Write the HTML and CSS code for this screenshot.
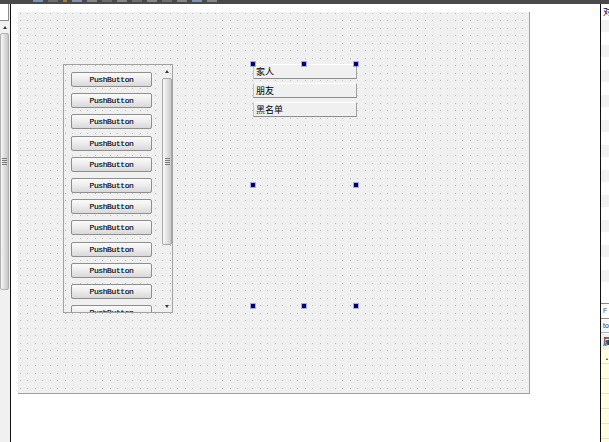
FILE: index.html
```html
<!DOCTYPE html>
<html lang="zh">
<head>
<meta charset="utf-8">
<title>Qt Designer</title>
<link rel="stylesheet" href="styles.css">
</head>
<body>
<div class="topbar">
  <div class="tb-icons">
    <span class="tbi c1"></span><span class="tbi c2"></span><span class="tbi c3"></span><span class="tbi c1"></span>
    <span class="tbi c4"></span><span class="tbi c2"></span><span class="tbi c4"></span><span class="tbi c2"></span>
    <span class="tbi c4"></span><span class="tbi c2"></span><span class="tbi c4"></span><span class="tbi c1"></span>
    <span class="tbi c4"></span>
  </div>
</div>
<div class="main">
  <aside class="left">
    <div class="left-field"></div>
    <div class="left-scroll">
      <div class="ls-up"><i class="tri-up"></i></div>
      <div class="ls-handle"><span class="grip"></span></div>
    </div>
  </aside>

  <section class="workspace">
    <div class="form">
      <div class="scrollarea">
        <div class="viewport">
          <div class="pb">PushButton</div>
          <div class="pb">PushButton</div>
          <div class="pb">PushButton</div>
          <div class="pb">PushButton</div>
          <div class="pb">PushButton</div>
          <div class="pb">PushButton</div>
          <div class="pb">PushButton</div>
          <div class="pb">PushButton</div>
          <div class="pb">PushButton</div>
          <div class="pb">PushButton</div>
          <div class="pb">PushButton</div>
          <div class="pb">PushButton</div>
        </div>
        <div class="vscroll">
          <div class="sb-up"><i class="tri-up"></i></div>
          <div class="sb-handle"><span class="grip"></span></div>
          <div class="sb-groove"></div>
          <div class="sb-down"><i class="tri-down"></i></div>
        </div>
      </div>

      <div class="vlayout">
        <div class="item">家人</div>
        <div class="item">朋友</div>
        <div class="item">黑名单</div>
        <span class="handle h-tl"></span>
        <span class="handle h-tc"></span>
        <span class="handle h-tr"></span>
        <span class="handle h-ml"></span>
        <span class="handle h-mr"></span>
        <span class="handle h-bl"></span>
        <span class="handle h-bc"></span>
        <span class="handle h-br"></span>
      </div>
    </div>
  </section>

  <aside class="right">
    <div class="rp-head">对</div>
    <div class="rp-list"></div>
    <div class="rp-spacer"></div>
    <div class="rp-filter">F</div>
    <div class="rp-field">to</div>
    <div class="rp-prophead">属</div>
    <div class="rp-props"><i class="rp-mark"></i></div>
  </aside>
</div>
</body>
</html>
```
FILE: styles.css
```css
* { box-sizing: border-box; }

html, body {
  margin: 0;
  padding: 0;
}

body {
  width: 609px;
  height: 442px;
  overflow: hidden;
  background: #ffffff;
  font-family: "Liberation Sans", "Noto Sans CJK SC", sans-serif;
}

/* ---------- top toolbar strip ---------- */
.topbar {
  height: 4px;
  background: #4a4a4a;
  overflow: hidden;
}

.tb-icons {
  display: flex;
  gap: 5px;
  margin-left: 33px;
}

.tbi {
  width: 10px;
  height: 2px;
}

.c1 { background: #7f92ae; }
.c2 { background: #6e6e6e; }
.c3 { background: #b07a3a; width: 4px; }
.c4 { background: #868686; }

/* ---------- layout ---------- */
.main {
  display: flex;
  height: 438px;
}

/* ---------- left dock ---------- */
.left {
  width: 11px;
  border-right: 1px solid #111111;
  background: #f0f0f0;
  display: flex;
  flex-direction: column;
}

.left-field {
  width: 9px;
  height: 17px;
  background: #ffffff;
  border-right: 1px solid #8c8c8c;
  border-bottom: 1px solid #8c8c8c;
}

.left-scroll {
  width: 9px;
  display: flex;
  flex-direction: column;
}

.ls-up {
  height: 12px;
  display: flex;
  align-items: center;
  justify-content: center;
}

.ls-handle {
  height: 257px;
  width: 9px;
  border: 1px solid #b0b0b0;
  border-radius: 2px;
  background: linear-gradient(90deg, #f6f6f6, #dadada 60%, #c6c6c6);
  display: flex;
  align-items: center;
  justify-content: center;
}

.tri-up {
  display: block;
  width: 0;
  height: 0;
  border-left: 2.5px solid transparent;
  border-right: 2.5px solid transparent;
  border-bottom: 3px solid #3a3a3a;
}

.tri-down {
  display: block;
  width: 0;
  height: 0;
  border-left: 2.5px solid transparent;
  border-right: 2.5px solid transparent;
  border-top: 3px solid #3a3a3a;
}

.grip {
  display: block;
  width: 5px;
  height: 7px;
  background: repeating-linear-gradient(#7a7a7a 0 1px, transparent 1px 2px);
}

/* ---------- central workspace ---------- */
.workspace {
  flex: 1;
  background: #ffffff;
  padding: 8px 0 0 7px;
}

.form {
  position: relative;
  width: 512px;
  height: 382px;
  background: #f0f0f0;
  border-right: 1px solid #a0a0a0;
  border-bottom: 1px solid #a0a0a0;
}

.form::before {
  content: "";
  position: absolute;
  inset: 0;
  pointer-events: none;
  background: linear-gradient(90deg, #b6b6b6 0 1px, transparent 1px 7px, #c2c2c2 7px 8px, transparent 8px) 2px 0 / 15px 100%;
  -webkit-mask: linear-gradient(#000 0 1px, transparent 1px 7px, #000 7px 8px, transparent 8px) 0 1px / 100% 15px;
  mask: linear-gradient(#000 0 1px, transparent 1px 7px, #000 7px 8px, transparent 8px) 0 1px / 100% 15px;
}

/* scroll area with push buttons */
.scrollarea {
  position: absolute;
  left: 45px;
  top: 52px;
  width: 110px;
  height: 249px;
  border: 1px solid #a2a2a2;
  display: flex;
}

.viewport {
  width: 97px;
  overflow: hidden;
  padding: 7px 0 0 7px;
  display: flex;
  flex-direction: column;
  gap: 6.2px;
}

.pb {
  flex: none;
  width: 81px;
  height: 15px;
  border: 1px solid #8e8e8e;
  border-radius: 2px;
  background: linear-gradient(#fbfbfb, #ececec 50%, #d8d8d8);
  font-family: "Liberation Mono", "DejaVu Sans Mono", monospace;
  font-size: 8px;
  letter-spacing: -0.4px;
  line-height: 13px;
  text-align: center;
  color: #000000;
  -webkit-text-stroke: 0.15px #000000;
}

.vscroll {
  width: 11px;
  display: flex;
  flex-direction: column;
}

.sb-up {
  height: 13px;
  display: flex;
  align-items: center;
  justify-content: center;
}

.sb-handle {
  height: 167px;
  width: 10px;
  margin-left: 1px;
  border: 1px solid #a6a6a6;
  border-radius: 2px;
  background: linear-gradient(90deg, #fafafa, #e0e0e0 55%, #c8c8c8);
  display: flex;
  align-items: center;
  justify-content: center;
}

.sb-groove {
  height: 55px;
}

.sb-down {
  height: 12px;
  display: flex;
  align-items: center;
  justify-content: center;
}

/* vertical layout with labels (selected) */
.vlayout {
  position: absolute;
  left: 235px;
  top: 52px;
  width: 104px;
  height: 242px;
  display: flex;
  flex-direction: column;
  gap: 4px;
}

.item {
  height: 15px;
  width: 104px;
  background: #f0f0f0;
  border-top: 1px solid #ffffff;
  border-left: 1px solid #c4c4c4;
  border-right: 1px solid #a0a0a0;
  border-bottom: 1px solid #8c8c8c;
  padding-left: 2px;
  font-family: "Noto Sans CJK SC", sans-serif;
  font-size: 9px;
  line-height: 13px;
  color: #000000;
}

.handle {
  position: absolute;
  width: 4px;
  height: 4px;
  background: #000070;
  box-shadow: 0 0 0 1px rgba(90, 90, 190, 0.45);
  transform: translate(-50%, -50%);
}

.h-tl { left: 0; top: 0; }
.h-tc { left: 51px; top: 0; }
.h-tr { left: 103px; top: 0; }
.h-ml { left: 0; top: 121px; }
.h-mr { left: 103px; top: 121px; }
.h-bl { left: 0; top: 242px; }
.h-bc { left: 51px; top: 242px; }
.h-br { left: 103px; top: 242px; }

/* ---------- right dock ---------- */
.right {
  width: 9px;
  border-left: 1px solid #111111;
  display: flex;
  flex-direction: column;
  overflow: hidden;
  font-family: "Noto Sans CJK SC", sans-serif;
  font-size: 9px;
  color: #000000;
}

.rp-head {
  height: 16px;
  line-height: 16px;
  padding-left: 2px;
  background: #ffffff;
  white-space: nowrap;
}

.rp-list {
  height: 265px;
  background: repeating-linear-gradient(#f2f2f2 0 12.5px, #ffffff 12.5px 25px);
}

.rp-spacer {
  height: 18px;
  background: #ffffff;
}

.rp-filter {
  height: 16px;
  border-top: 1px solid #8a8a8a;
  border-bottom: 1px solid #8a8a8a;
  background: #ffffff;
  padding-left: 2px;
  font-family: "Liberation Sans", sans-serif;
  font-size: 7px;
  line-height: 14px;
  color: #555555;
}

.rp-field {
  height: 13px;
  margin-top: 1px;
  border-bottom: 1px solid #b0b0b0;
  background: #f7f7f7;
  padding-left: 2px;
  font-family: "Liberation Sans", sans-serif;
  font-size: 7px;
  line-height: 12px;
  color: #333333;
}

.rp-prophead {
  height: 15px;
  margin-top: 1px;
  background: #f0f0f0;
  padding-left: 2px;
  line-height: 15px;
  white-space: nowrap;
}

.rp-props {
  flex: 1;
  position: relative;
  background: repeating-linear-gradient(#ffffe2 0 14px, #e6e6cc 14px 15px);
}

.rp-mark {
  position: absolute;
  left: 5px;
  top: 9px;
  width: 0;
  height: 0;
  border-left: 1.5px solid transparent;
  border-right: 1.5px solid transparent;
  border-bottom: 2px solid #333333;
}
```
